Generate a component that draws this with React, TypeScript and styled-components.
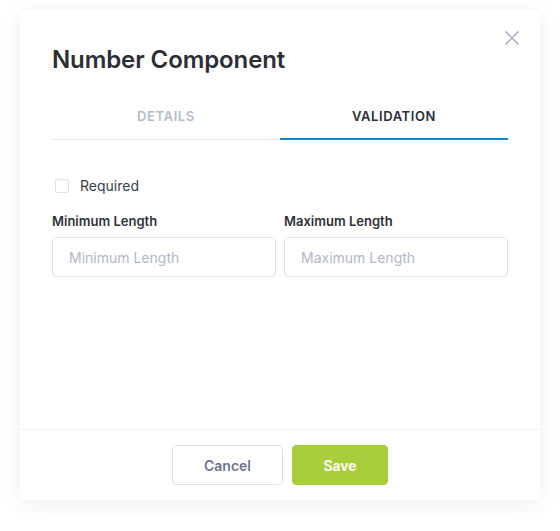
import React, { useState } from 'react';
import styled, { createGlobalStyle } from 'styled-components';

const GlobalStyle = createGlobalStyle`
	html, body {
		margin: 0;
		padding: 0;
		background: #ffffff;
	}
	body {
		font-family: Inter, 'Noto Sans', sans-serif;
		-webkit-font-smoothing: antialiased;
	}
	* {
		box-sizing: border-box;
	}
`;

const Page = styled.div`
	width: 560px;
	height: 531px;
	padding: 10px 20px;
`;

const Modal = styled.div`
	position: relative;
	width: 520px;
	height: 490px;
	background: #ffffff;
	border-radius: 5px;
	box-shadow: 0 4px 22px rgba(30, 40, 60, 0.07), 0 0 2px rgba(30, 40, 60, 0.04);
	display: flex;
	flex-direction: column;
`;

const Body = styled.div`
	flex: 1;
	padding: 34px 32px 0;
`;

const Title = styled.h2`
	margin: 0;
	font-size: 24px;
	line-height: 32px;
	font-weight: 600;
	color: #2c2e35;
	letter-spacing: -0.1px;
`;

const CloseButton = styled.button`
	position: absolute;
	top: 15px;
	right: 15px;
	width: 26px;
	height: 26px;
	padding: 0;
	border: 0;
	background: transparent;
	display: flex;
	align-items: center;
	justify-content: center;
	cursor: pointer;
	color: #b4bccb;
`;

const Tabs = styled.div`
	display: grid;
	grid-template-columns: minmax(0, 1fr) minmax(0, 1fr);
	margin-top: 24px;
	border-bottom: 1px solid #e1e5eb;
`;

const Tab = styled.button<{ $active?: boolean }>`
	height: 40px;
	padding: 0 0 6px;
	margin-bottom: -1px;
	border: 0;
	border-bottom: 2px solid ${p => (p.$active ? '#0d86d1' : 'transparent')};
	background: transparent;
	font-family: inherit;
	font-size: 13px;
	font-weight: 600;
	letter-spacing: 0.6px;
	text-transform: uppercase;
	color: ${p => (p.$active ? '#2c2e35' : '#b3bccb')};
	cursor: pointer;
`;

const CheckRow = styled.label`
	display: flex;
	align-items: center;
	gap: 11px;
	margin-top: 37px;
	padding-left: 3px;
	font-size: 14px;
	color: #3a3d45;
	cursor: pointer;
`;

const CheckBox = styled.span`
	width: 14px;
	height: 14px;
	border: 1px solid #dde1ea;
	border-radius: 2px;
	background: #ffffff;
`;

const FieldGrid = styled.div`
	display: grid;
	grid-template-columns: minmax(0, 1fr) minmax(0, 1fr);
	gap: 8px;
	margin-top: 18px;
`;

const Field = styled.div`
	display: flex;
	flex-direction: column;
	min-width: 0;
`;

const Label = styled.label`
	font-size: 13px;
	line-height: 18px;
	font-weight: 600;
	color: #2f3138;
	margin-bottom: 7px;
`;

const Input = styled.input`
	width: 100%;
	height: 40px;
	padding: 0 16px;
	border: 1px solid #dfe3ea;
	border-radius: 4px;
	font-family: inherit;
	font-size: 14px;
	color: #2f3138;
	outline: none;

	&::placeholder {
		color: #b1b8c7;
	}
`;

const Footer = styled.div`
	display: flex;
	justify-content: center;
	gap: 9px;
	padding: 15px 32px 15px;
	border-top: 1px solid #eef0f4;
`;

const Button = styled.button<{ $primary?: boolean }>`
	height: 40px;
	padding: 0;
	width: ${p => (p.$primary ? '96px' : '111px')};
	border-radius: 4px;
	border: 1px solid ${p => (p.$primary ? '#a9ce3c' : '#dde1ea')};
	background: ${p => (p.$primary ? '#a9ce3c' : '#ffffff')};
	color: ${p => (p.$primary ? '#ffffff' : '#6c7590')};
	font-family: inherit;
	font-size: 14px;
	font-weight: 600;
	cursor: pointer;
`;

function CloseIcon() {
	return (
		<svg width='14' height='14' viewBox='0 0 14 14' fill='none'>
			<path d='M1 1L13 13M13 1L1 13' stroke='currentColor' strokeWidth='1.8' strokeLinecap='round' />
		</svg>
	);
}

export default function App() {
	const [tab, setTab] = useState<'details' | 'validation'>('validation');
	return (
		<>
			<GlobalStyle />
			<Page>
				<Modal>
					<CloseButton aria-label='Close'>
						<CloseIcon />
					</CloseButton>
					<Body>
						<Title>Number Component</Title>
						<Tabs>
							<Tab $active={tab === 'details'} onClick={() => setTab('details')}>
								Details
							</Tab>
							<Tab $active={tab === 'validation'} onClick={() => setTab('validation')}>
								Validation
							</Tab>
						</Tabs>
						<CheckRow>
							<CheckBox />
							Required
						</CheckRow>
						<FieldGrid>
							<Field>
								<Label>Minimum Length</Label>
								<Input placeholder='Minimum Length' />
							</Field>
							<Field>
								<Label>Maximum Length</Label>
								<Input placeholder='Maximum Length' />
							</Field>
						</FieldGrid>
					</Body>
					<Footer>
						<Button>Cancel</Button>
						<Button $primary>Save</Button>
					</Footer>
				</Modal>
			</Page>
		</>
	);
}
